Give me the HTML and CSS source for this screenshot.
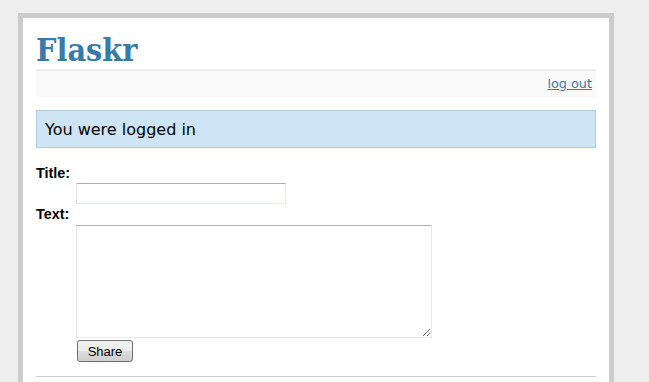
FILE: index.html
```html
<!DOCTYPE html>
<html lang="en">
<head>
    <meta charset="UTF-8">
    <title>Flaskr</title>
    <link rel="stylesheet" href="styles.css">
</head>
<body>
    <div class="page">
        <h1>Flaskr</h1>
        <div class="metanav">
            <a href="#">log out</a>
        </div>
        <div class="flash">You were logged in</div>

        <!-- Add entry form -->
        <form class="add-entry" action="#" method="post">
            <dl>
                <dt>Title:</dt>
                <dd><input type="text" size="30" name="title"></dd>
                <dt>Text:</dt>
                <dd><textarea name="text" rows="5" cols="40"></textarea></dd>
                <dd><input type="submit" value="Share"></dd>
            </dl>
        </form>
    </div>
</body>
</html>
```

FILE: styles.css
```css
/* General */
html {
    overflow: hidden;
}

body {
    font-family: 'DejaVu Sans', Verdana, sans-serif;
    background: #eee;
    margin: 0;
}

a, h1, h2 {
    color: #377ba8;
}

h1, h2 {
    font-family: 'DejaVu Serif Condensed', 'DejaVu Serif', Georgia, serif;
    margin: 0;
}

h1 {
    font-size: 32px;
    line-height: 37px;
    padding-top: 1px;
    border-bottom: 2px solid #eee;
}

/* Page box */
.page {
    margin: 13px 0 0 18px;
    width: 560px;
    min-height: 600px;
    border: 5px solid #ccc;
    padding: 13px;
    background: white;
}

/* Top nav */
.metanav {
    text-align: right;
    font-size: 12.8px;
    line-height: 18px;
    padding: 4px;
    margin-bottom: 13px;
    background: #fafafa;
}

/* Flash message */
.flash {
    background: #cee5f5;
    padding: 9px 8px 7px;
    border: 1px solid #aacbe2;
    font-size: 16px;
    line-height: 20px;
}

/* Add entry form */
.add-entry {
    font-size: 14.4px;
    border-bottom: 1px solid #ccc;
}

.add-entry dl {
    margin: 15px 0 14px;
    font-weight: bold;
}

.add-entry dt {
    font-family: 'Liberation Sans', Arial, sans-serif;
    line-height: 20px;
}

.add-entry dd {
    margin-left: 40px;
}

.add-entry input[type=text],
.add-entry textarea {
    display: block;
    box-sizing: border-box;
    border: 1px solid;
    border-color: #abadb3 #e3e9ef #e3e9ef #e2e3ea;
    padding: 1px 2px;
    font-family: 'DejaVu Sans', sans-serif;
    font-size: 13px;
    margin: 0;
}

.add-entry input[type=text] {
    width: 210px;
    height: 21px;
}

.add-entry textarea {
    width: 356px;
    height: 113px;
    margin-top: 1px;
}

.add-entry input[type=submit] {
    display: block;
    box-sizing: border-box;
    width: 56px;
    height: 22px;
    margin: 2px 0 0 1px;
    padding: 0;
    font-family: 'Liberation Sans', Tahoma, sans-serif;
    font-size: 13px;
    font-weight: normal;
    color: #000;
    border: 1px solid #707070;
    border-radius: 3px;
    background: linear-gradient(to bottom, #f2f2f2 0%, #ebebeb 50%, #dddddd 51%, #cfcfcf 100%);
}
```
